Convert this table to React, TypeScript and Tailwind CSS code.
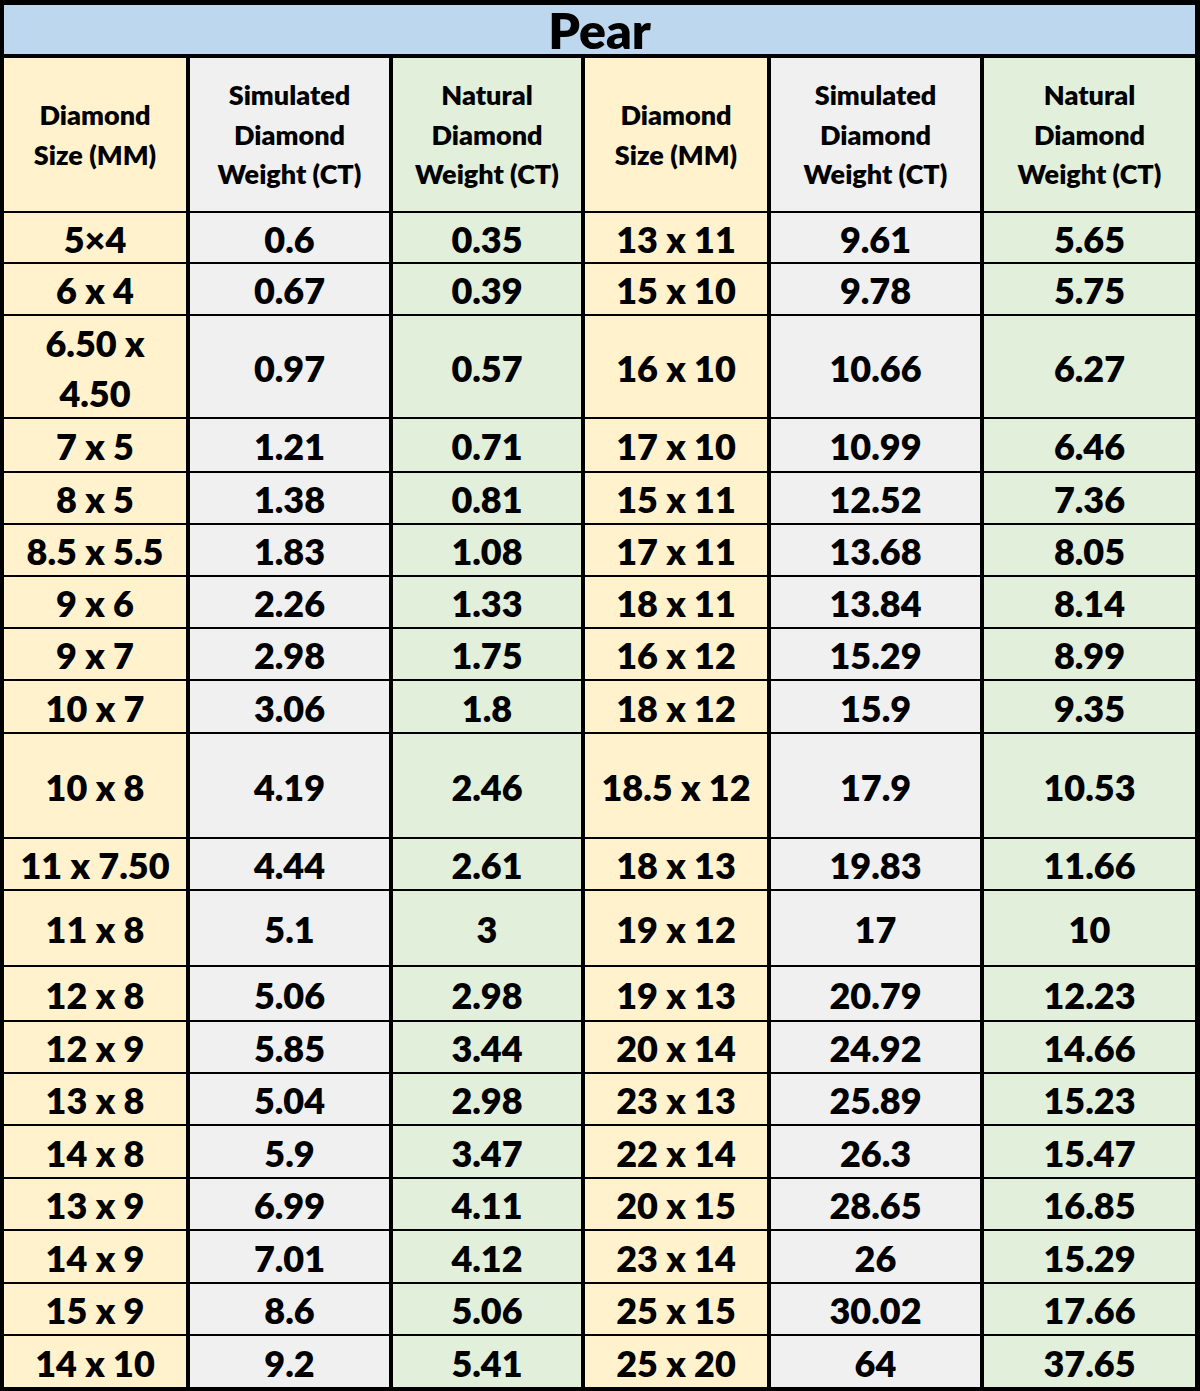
import React from "react";

const rows: [string, string, string, string, string, string][] = [
  ["5×4", "0.6", "0.35", "13 x 11", "9.61", "5.65"],
  ["6 x 4", "0.67", "0.39", "15 x 10", "9.78", "5.75"],
  ["6.50 x|4.50", "0.97", "0.57", "16 x 10", "10.66", "6.27"],
  ["7 x 5", "1.21", "0.71", "17 x 10", "10.99", "6.46"],
  ["8 x 5", "1.38", "0.81", "15 x 11", "12.52", "7.36"],
  ["8.5 x 5.5", "1.83", "1.08", "17 x 11", "13.68", "8.05"],
  ["9 x 6", "2.26", "1.33", "18 x 11", "13.84", "8.14"],
  ["9 x 7", "2.98", "1.75", "16 x 12", "15.29", "8.99"],
  ["10 x 7", "3.06", "1.8", "18 x 12", "15.9", "9.35"],
  ["10 x 8", "4.19", "2.46", "18.5 x 12", "17.9", "10.53"],
  ["11 x 7.50", "4.44", "2.61", "18 x 13", "19.83", "11.66"],
  ["11 x 8", "5.1", "3", "19 x 12", "17", "10"],
  ["12 x 8", "5.06", "2.98", "19 x 13", "20.79", "12.23"],
  ["12 x 9", "5.85", "3.44", "20 x 14", "24.92", "14.66"],
  ["13 x 8", "5.04", "2.98", "23 x 13", "25.89", "15.23"],
  ["14 x 8", "5.9", "3.47", "22 x 14", "26.3", "15.47"],
  ["13 x 9", "6.99", "4.11", "20 x 15", "28.65", "16.85"],
  ["14 x 9", "7.01", "4.12", "23 x 14", "26", "15.29"],
  ["15 x 9", "8.6", "5.06", "25 x 15", "30.02", "17.66"],
  ["14 x 10", "9.2", "5.41", "25 x 20", "64", "37.65"],
];

const bgs = ["bg-[#fff2cc]", "bg-[#f0f0f0]", "bg-[#e2efda]", "bg-[#fff2cc]", "bg-[#f0f0f0]", "bg-[#e2efda]"];

const headers = [
  ["Diamond", "Size (MM)"],
  ["Simulated", "Diamond", "Weight (CT)"],
  ["Natural", "Diamond", "Weight (CT)"],
  ["Diamond", "Size (MM)"],
  ["Simulated", "Diamond", "Weight (CT)"],
  ["Natural", "Diamond", "Weight (CT)"],
];

export default function App() {
  return (
    <div
      className="w-[1200px] h-[1391px] bg-black pt-[5px] pl-[4px] pr-[5px] pb-[4px] text-black"
      style={{ fontFamily: 'Lato, "Open Sans", sans-serif' }}
    >
      <div className="h-[49px] mb-[4px] bg-[#bdd7ee] flex items-center justify-center">
        <span className="text-[50px] font-extrabold leading-none pt-[1px]">Pear</span>
      </div>
      <div className="grid grid-cols-[182px_199px_188px_182px_209px_211px] grid-rows-[153px_49px_50px_101px_52px_50px_50px_50px_50px_51px_103px_50px_74px_53px_50px_50px_51px_50px_51px_50px_51px] gap-x-[4px] gap-y-[2px]">
        {headers.map((h, i) => (
          <div key={"h" + i} className={`${bgs[i]} flex flex-col items-center justify-center text-[27px] font-extrabold leading-[39.5px] text-center`}>
            {h.map((l, j) => (
              <div key={j}>{l}</div>
            ))}
          </div>
        ))}
        {rows.map((r, ri) =>
          r.map((c, ci) => (
            <div
              key={ri + "-" + ci}
              className={`${bgs[ci]} flex flex-col items-center justify-center text-[36px] font-extrabold leading-[50px] text-center pt-[2px]`}
            >
              {c.split("|").map((p, k) => (
                <div key={k}>{p}</div>
              ))}
            </div>
          ))
        )}
      </div>
    </div>
  );
}
